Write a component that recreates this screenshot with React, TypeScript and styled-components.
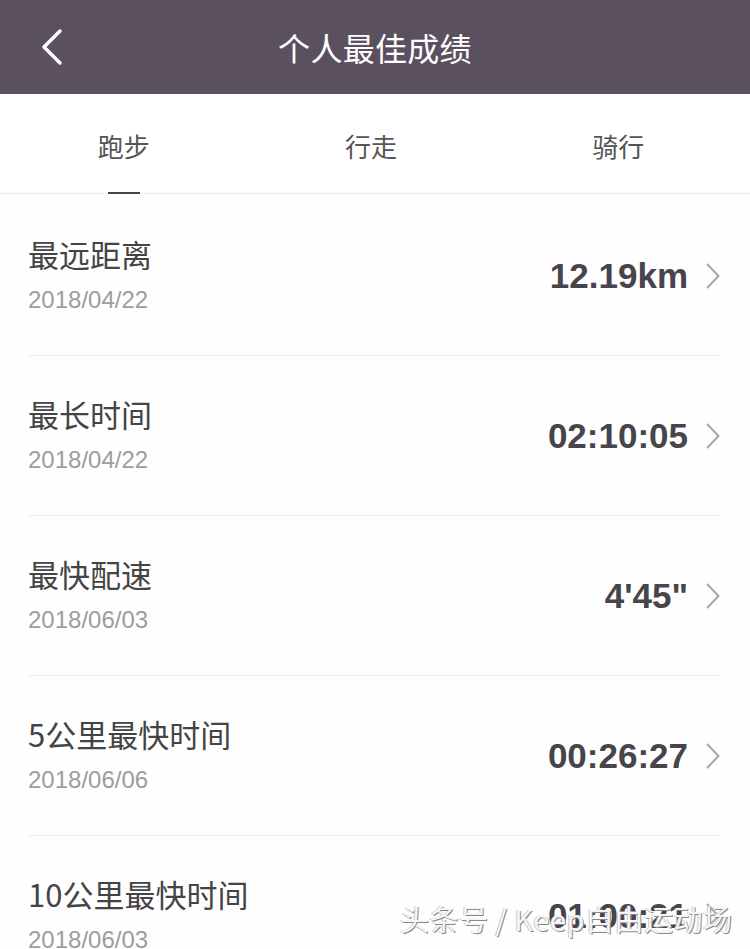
import React from "react";
import styled, { createGlobalStyle } from "styled-components";

const GlobalStyle = createGlobalStyle`
  html, body { margin: 0; padding: 0; background: #ffffff; overflow: hidden; }
  * { box-sizing: border-box; }
`;

const Page = styled.div`
  position: relative;
  width: 750px;
  height: 949px;
  overflow: hidden;
  background: #fefefe;
  font-family: "Noto Sans CJK SC", "Noto Sans", sans-serif;
`;

const Header = styled.header`
  height: 94px;
  background: #5b5060;
  display: grid;
  grid-template-columns: 110px 1fr 110px;
  align-items: center;
`;

const BackButton = styled.button`
  border: 0;
  background: transparent;
  padding: 0 0 0 40px;
  height: 94px;
  display: flex;
  align-items: center;
  cursor: pointer;
`;

const Title = styled.h1`
  margin: 0;
  text-align: center;
  color: #ffffff;
  font-size: 32px;
  font-weight: 400;
  line-height: 40px;
  letter-spacing: 0.3px;
`;

const Tabs = styled.nav`
  height: 100px;
  display: grid;
  grid-template-columns: repeat(3, 1fr);
  padding-right: 8px;
  border-bottom: 1px solid #ebebeb;
  background: #ffffff;
`;

const Tab = styled.div<{ $active?: boolean }>`
  position: relative;
  display: flex;
  align-items: center;
  justify-content: center;
  padding-top: 4px;
  font-size: 26px;
  color: #555555;
  &::after {
    content: "";
    display: ${(p) => (p.$active ? "block" : "none")};
    position: absolute;
    left: 50%;
    bottom: -1px;
    width: 32px;
    margin-left: -16px;
    height: 2px;
    background: #444444;
  }
`;

const List = styled.ul`
  list-style: none;
  margin: 0;
  padding: 2px 30px 0 28px;
`;

const Row = styled.li`
  height: 160px;
  border-bottom: 1px solid #ececec;
  display: flex;
  align-items: center;
  justify-content: space-between;
`;

const Info = styled.div`
  display: flex;
  flex-direction: column;
  gap: 8px;
`;

const RowTitle = styled.div`
  font-size: 31px;
  line-height: 40px;
  color: #444444;
  font-weight: 400;
`;

const RowDate = styled.div`
  font-family: "Liberation Sans", Arial, sans-serif;
  font-size: 24px;
  line-height: 36px;
  color: #9d9d9d;
`;

const ValueWrap = styled.div`
  display: flex;
  align-items: center;
  gap: 18px;
`;

const Value = styled.div`
  font-family: "Liberation Sans", Arial, sans-serif;
  font-weight: 700;
  font-size: 35px;
  line-height: 40px;
  color: #47444c;
`;

const Watermark = styled.div`
  position: absolute;
  left: 400px;
  top: 898px;
  font-size: 29px;
  line-height: 40px;
  color: rgba(255, 255, 255, 0.92);
  text-shadow: 1px 1px 0 #8a8a8a, -1px 0 0 #c8c8c8;
  white-space: nowrap;
  letter-spacing: 0.5px;
`;

const BackIcon = () => (
  <svg width="24" height="38" viewBox="0 0 24 38" fill="none">
    <polyline
      points="20,3 4,19 20,35"
      stroke="#ffffff"
      strokeWidth="3.5"
      strokeLinecap="round"
      strokeLinejoin="round"
    />
  </svg>
);

const Chevron = () => (
  <svg width="14" height="26" viewBox="0 0 14 26" fill="none">
    <polyline
      points="1.5,1.5 12.5,13 1.5,24.5"
      stroke="#a8a8a8"
      strokeWidth="2"
      strokeLinecap="round"
      strokeLinejoin="round"
    />
  </svg>
);

const records = [
  { title: "最远距离", date: "2018/04/22", value: "12.19km" },
  { title: "最长时间", date: "2018/04/22", value: "02:10:05" },
  { title: "最快配速", date: "2018/06/03", value: "4'45\"" },
  { title: "5公里最快时间", date: "2018/06/06", value: "00:26:27" },
  { title: "10公里最快时间", date: "2018/06/03", value: "01:00:21" },
];

export default function App() {
  return (
    <>
      <GlobalStyle />
      <Page>
        <Header>
          <BackButton aria-label="返回">
            <BackIcon />
          </BackButton>
          <Title>个人最佳成绩</Title>
          <span />
        </Header>
        <Tabs>
          <Tab $active>跑步</Tab>
          <Tab>行走</Tab>
          <Tab>骑行</Tab>
        </Tabs>
        <List>
          {records.map((r) => (
            <Row key={r.title}>
              <Info>
                <RowTitle>{r.title}</RowTitle>
                <RowDate>{r.date}</RowDate>
              </Info>
              <ValueWrap>
                <Value>{r.value}</Value>
                <Chevron />
              </ValueWrap>
            </Row>
          ))}
        </List>
        <Watermark>头条号 / Keep自由运动场</Watermark>
      </Page>
    </>
  );
}
